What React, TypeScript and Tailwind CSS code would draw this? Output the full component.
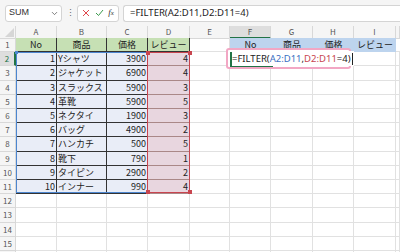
import { ChevronDown } from "lucide-react";

const items = [
  ["1", "Yシャツ", "3900", "4"],
  ["2", "ジャケット", "6900", "4"],
  ["3", "スラックス", "5900", "3"],
  ["4", "革靴", "5900", "5"],
  ["5", "ネクタイ", "1900", "3"],
  ["6", "バッグ", "4900", "2"],
  ["7", "ハンカチ", "500", "5"],
  ["8", "靴下", "790", "1"],
  ["9", "タイピン", "2900", "2"],
  ["10", "インナー", "990", "4"],
];

const cols = ["A", "B", "C", "D", "E", "F", "G", "H", "I", ""];
const gridCols = "grid grid-cols-[16px_41px_50px_41px_42px_40px_41px_42px_41px_42px_4px]";
const font = { fontFamily: '"Noto Sans CJK JP", "Noto Sans", sans-serif' };

function Blank({ n }: { n: number }) {
  return (
    <>
      {Array.from({ length: n }).map((_, i) => (
        <div key={i} className="border-r border-b border-[#e1e1e1] bg-white" />
      ))}
    </>
  );
}

export default function App() {
  return (
    <div className="relative w-[400px] h-[252px] overflow-hidden bg-white text-[#222]" style={font}>
      {/* formula bar */}
      <div className="h-[26px] bg-[#f5f5f5] flex items-center pl-[5px] gap-[4px]">
        <div className="w-[57px] h-[17px] bg-white border border-[#d4d4d4] rounded-[3px] flex items-center justify-between pl-[3px] pr-[2px]">
          <span className="text-[9px] text-[#333]" style={{ fontFamily: '"Liberation Sans", sans-serif' }}>SUM</span>
          <ChevronDown className="w-[9px] h-[9px] text-[#555]" strokeWidth={2} />
        </div>
        <span className="text-[9px] text-[#666] w-[7px] text-center">⋮</span>
        <div className="w-[42px] h-[17px] bg-white border border-[#d4d4d4] rounded-[3px] flex items-center justify-around px-[2px]">
          <svg width="8" height="8" viewBox="0 0 8 8"><path d="M1 1L7 7M7 1L1 7" stroke="#e0474c" strokeWidth="1" /></svg>
          <svg width="9" height="8" viewBox="0 0 9 8"><path d="M1 4L3.5 6.5L8 1" stroke="#3a9b4c" strokeWidth="1" fill="none" /></svg>
          <span className="text-[9px] italic text-[#333]" style={{ fontFamily: '"Liberation Serif", serif' }}>f<span className="text-[7px]">x</span></span>
        </div>
        <div className="flex-1 h-[17px] bg-white border border-[#d4d4d4] border-r-0 rounded-l-[3px] flex items-center pl-[6px]">
          <span className="text-[9.5px] text-[#222]" style={{ fontFamily: '"Noto Sans", sans-serif' }}>=FILTER(A2:D11,D2:D11=4)</span>
        </div>
      </div>

      {/* column headers */}
      <div className={`${gridCols} h-[12px] bg-[#f5f5f5] text-[8px] text-[#555] leading-[12px]`}>
        <div className="relative border-r border-b border-[#d8d8d8]">
          <svg className="absolute right-[1px] bottom-[1px]" width="9" height="9" viewBox="0 0 9 9"><path d="M9 0V9H0Z" fill="#d6d6d6" /></svg>
        </div>
        {cols.map((c, i) => (
          <div
            key={i}
            className={
              c === "F"
                ? "text-center bg-[#dedede] border-r border-[#d8d8d8] border-b-2 border-b-[#217346] leading-[11px]"
                : "text-center border-r border-b border-[#d8d8d8]"
            }
          >
            {c}
          </div>
        ))}
      </div>

      {/* row 1 */}
      <div className={`${gridCols} h-[14.3px] text-[9px] leading-[13px]`}>
        <div className="bg-[#f5f5f5] border-r border-b border-[#d8d8d8] text-[8px] text-[#555] text-center">1</div>
        {["No", "商品", "価格", "レビュー"].map((t, i) => (
          <div key={i} className="bg-[#c6e0b4] border-r border-b border-[#333] text-center">{t}</div>
        ))}
        <div className="border-r border-b border-[#e1e1e1]" />
        {["No", "商品", "価格", "レビュー"].map((t, i) => (
          <div key={i} className="bg-[#bdd4ee] text-center">{t}</div>
        ))}
        <div className="border-b border-[#e1e1e1]" />
      </div>

      {/* data rows */}
      {items.map((r, i) => (
        <div key={i} className={`${gridCols} h-[14.2px] text-[9px] leading-[13px]`}>
          <div
            className={
              i === 0
                ? "bg-[#dedede] border-r-2 border-r-[#217346] border-b border-[#d8d8d8] text-[8px] text-[#217346] text-center"
                : "bg-[#f5f5f5] border-r border-b border-[#d8d8d8] text-[8px] text-[#555] text-center"
            }
          >
            {i + 2}
          </div>
          <div className="bg-[#e9edf7] border-r border-b border-[#333] text-right pr-[1px]">{r[0]}</div>
          <div className="bg-[#e9edf7] border-r border-b border-[#333] pl-[1px] whitespace-nowrap">{r[1]}</div>
          <div className="bg-[#e9edf7] border-r border-b border-[#333] text-right pr-[1px]">{r[2]}</div>
          <div className="bg-[#e8d6df] border-b border-[#a88] text-right pr-[2px]">{r[3]}</div>
          <Blank n={6} />
        </div>
      ))}

      {/* empty rows */}
      {[12, 13, 14, 15].map((n) => (
        <div key={n} className={`${gridCols} h-[14.2px] text-[8px] leading-[13px]`}>
          <div className="bg-[#f5f5f5] border-r border-b border-[#d8d8d8] text-[#555] text-center">{n}</div>
          <Blank n={10} />
        </div>
      ))}
      <div className={`${gridCols} h-[14.2px]`}>
        <div className="bg-[#f5f5f5] border-r border-[#d8d8d8]" />
        <Blank n={10} />
      </div>

      {/* reference highlight: A2:D11 (blue) */}
      <div className="absolute left-[16px] top-[52px] w-[132px] h-[141px] border-l border-t border-b-[1.5px] border-[#4d86cf] pointer-events-none" />
      <div className="absolute left-[15px] top-[51px] w-[3px] h-[3px] bg-[#4d86cf]" />
      {/* reference highlight: D2:D11 (red) */}
      <div className="absolute left-[147px] top-[52px] w-[43px] h-[141px] border-[1.5px] border-[#c8454f] pointer-events-none" />
      <div className="absolute left-[146px] top-[51px] w-[4px] h-[4px] bg-[#c8454f]" />
      <div className="absolute left-[188px] top-[51px] w-[4px] h-[4px] bg-[#c8454f]" />
      <div className="absolute left-[146px] top-[190px] w-[4px] h-[4px] bg-[#c8454f]" />
      <div className="absolute left-[188px] top-[190px] w-[4px] h-[4px] bg-[#c8454f]" />

      {/* editing cell F2 with callout */}
      <div className="absolute left-[226px] top-[48px] w-[125px] h-[21px] border-2 border-[#f2a7c4] rounded-[3px] bg-white" />
      <div className="absolute left-[230px] top-[52px] w-[43px] h-[15px] border-l-2 border-b-2 border-[#217346]" />
      <div className="absolute left-[232px] top-[51px] h-[15px] bg-white flex items-center pr-[1px]">
        <span className="text-[9.5px] leading-[14px] text-[#222] whitespace-nowrap" style={{ fontFamily: '"Noto Sans", sans-serif' }}>
          =FILTER(<span className="text-[#3d6fc2]">A2:D11</span>,<span className="text-[#c8454f]">D2:D11</span>=4)
        </span>
        <span className="ml-[1px] w-px h-[12px] bg-[#222]" />
      </div>
    </div>
  );
}
